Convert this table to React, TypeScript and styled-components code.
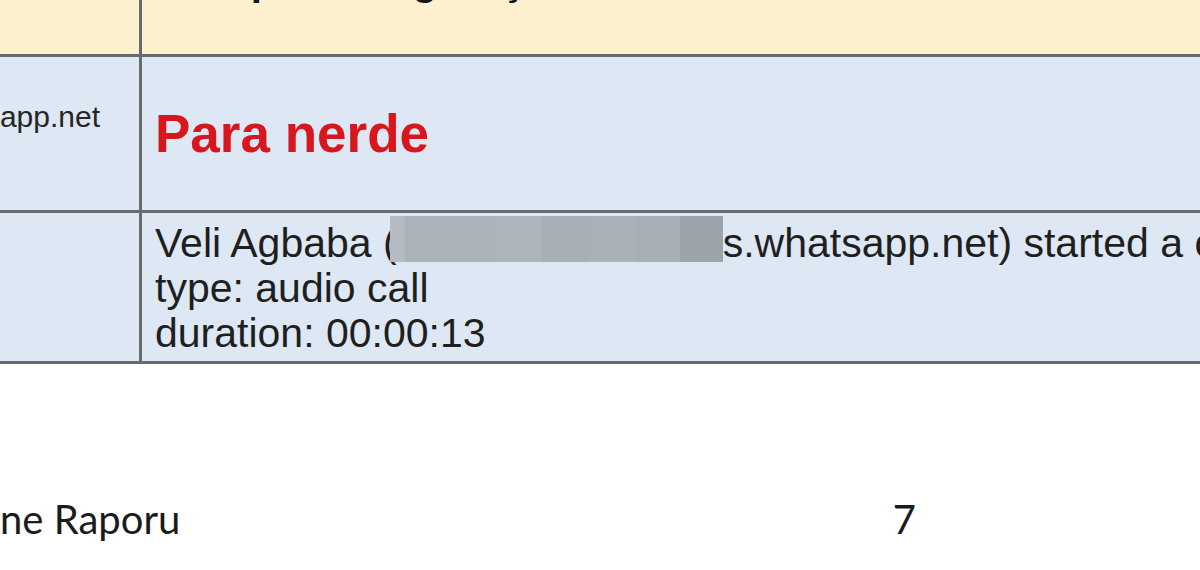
import React from "react";
import styled, { createGlobalStyle } from "styled-components";

const GlobalStyle = createGlobalStyle`
  html, body {
    margin: 0;
    padding: 0;
    background: #ffffff;
  }
  body {
    width: 1200px;
    height: 570px;
    overflow: hidden;
  }
`;

const Page = styled.div`
  width: 1200px;
  height: 570px;
  overflow: hidden;
  background: #ffffff;
  display: flex;
  flex-direction: column;
`;

const Table = styled.div`
  display: flex;
  flex-direction: column;
  width: 1200px;
`;

const Row = styled.div<{ $bg: string; $h: number }>`
  display: grid;
  grid-template-columns: 142px 1fr;
  height: ${(p) => p.$h}px;
  background: ${(p) => p.$bg};
  border-bottom: 3px solid #676a6e;
`;

const LeftCell = styled.div`
  border-right: 3px solid #676a6e;
  overflow: hidden;
  display: flex;
  justify-content: flex-end;
  align-items: flex-start;
  padding-right: 39px;
  box-sizing: border-box;
`;

const RightCell = styled.div<{ $pt?: number }>`
  overflow: hidden;
  padding-left: 13px;
  padding-top: ${(p) => p.$pt || 0}px;
  box-sizing: border-box;
  white-space: nowrap;
`;

const ClippedHeading = styled.div`
  font-family: "Liberation Sans", Arial, sans-serif;
  font-weight: 700;
  font-size: 40px;
  line-height: 40px;
  color: #151515;
  margin-top: -39px;
`;

const SideText = styled.div`
  font-family: "Liberation Sans", Arial, sans-serif;
  font-size: 30px;
  line-height: 34px;
  color: #262626;
  white-space: nowrap;
  margin-top: 43px;
`;

const RedTitle = styled.div`
  font-family: "Liberation Sans", Arial, sans-serif;
  font-weight: 700;
  font-size: 53px;
  line-height: 59px;
  color: #d8161e;
`;

const Body = styled.div`
  font-family: "Liberation Sans", Arial, sans-serif;
  font-size: 41px;
  line-height: 45px;
  color: #1f1f1f;
`;

const Line = styled.div`
  white-space: nowrap;
`;

const Redaction = styled.span`
  display: inline-flex;
  width: 333px;
  height: 46px;
  margin: -10px 0 0 -7px;
  vertical-align: -5px;
`;

const Tile = styled.span<{ $c: string; $w: number }>`
  display: block;
  width: ${(p) => p.$w}px;
  height: 100%;
  background: ${(p) => p.$c};
`;

const Footer = styled.div`
  display: flex;
  align-items: baseline;
  margin-top: 131px;
  padding-right: 284px;
  font-family: Lato, "Open Sans", sans-serif;
  font-size: 40px;
  line-height: 48px;
  color: #1b1b1b;
`;

const FooterTitle = styled.span`
  white-space: nowrap;
`;

const PageNum = styled.span`
  margin-left: auto;
`;

const tiles = [
  { c: "#b4bbc2", w: 15 },
  { c: "#aab2ba", w: 91 },
  { c: "#adb5bc", w: 45 },
  { c: "#a7afb7", w: 47 },
  { c: "#aab2b9", w: 47 },
  { c: "#a8b0b7", w: 45 },
  { c: "#9ca4ab", w: 43 },
];

export default function App() {
  return (
    <>
      <GlobalStyle />
      <Page>
        <Table>
          <Row $bg="#fdf0cf" $h={54}>
            <LeftCell />
            <RightCell>
              <ClippedHeading>Hesap sahibi görüşme notları</ClippedHeading>
            </RightCell>
          </Row>
          <Row $bg="#dde8f4" $h={153}>
            <LeftCell>
              <SideText>@s.whatsapp.net</SideText>
            </LeftCell>
            <RightCell $pt={47}>
              <RedTitle>Para nerde</RedTitle>
            </RightCell>
          </Row>
          <Row $bg="#dde8f4" $h={148}>
            <LeftCell />
            <RightCell $pt={8}>
              <Body>
                <Line>
                  Veli Agbaba (
                  <Redaction>
                    {tiles.map((t, i) => (
                      <Tile key={i} $c={t.c} $w={t.w} />
                    ))}
                  </Redaction>
                  s.whatsapp.net) started a call
                </Line>
                <Line>type: audio call</Line>
                <Line>duration: 00:00:13</Line>
              </Body>
            </RightCell>
          </Row>
        </Table>
        <Footer>
          <FooterTitle>ne Raporu</FooterTitle>
          <PageNum>7</PageNum>
        </Footer>
      </Page>
    </>
  );
}
